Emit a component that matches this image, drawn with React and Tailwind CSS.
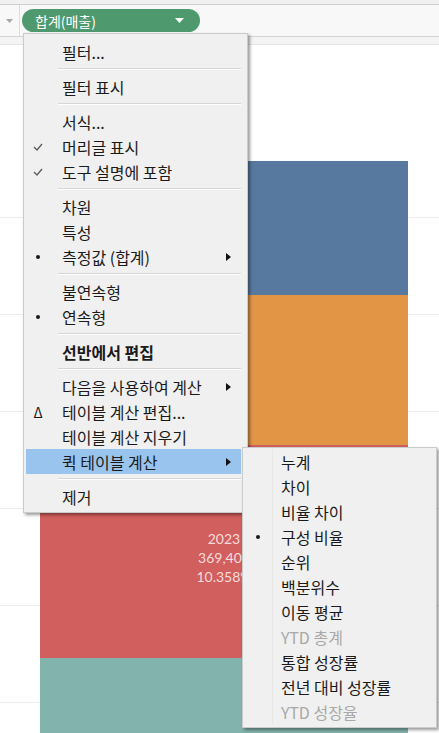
import { useState } from 'react'

const MENU = [
  { label: '필터...' },
  { sep: true },
  { label: '필터 표시' },
  { sep: true },
  { label: '서식...' },
  { label: '머리글 표시', mark: 'check' },
  { label: '도구 설명에 포함', mark: 'check' },
  { sep: true },
  { label: '차원' },
  { label: '특성' },
  { label: '측정값 (합계)', mark: 'dot', sub: true },
  { sep: true },
  { label: '불연속형' },
  { label: '연속형', mark: 'dot' },
  { sep: true },
  { label: '선반에서 편집', bold: true },
  { sep: true },
  { label: '다음을 사용하여 계산', sub: true },
  { label: '테이블 계산 편집...', mark: 'delta' },
  { label: '테이블 계산 지우기' },
  { label: '퀵 테이블 계산', sub: true, active: true },
  { sep: true },
  { label: '제거' },
]

const QUICK = [
  { label: '누계' },
  { label: '차이' },
  { label: '비율 차이' },
  { label: '구성 비율', mark: 'dot' },
  { label: '순위' },
  { label: '백분위수' },
  { label: '이동 평균' },
  { label: 'YTD 총계', disabled: true },
  { label: '통합 성장률' },
  { label: '전년 대비 성장률' },
  { label: 'YTD 성장율', disabled: true },
]

function Mark({ type }) {
  if (type === 'check')
    return (
      <svg width="10" height="8" viewBox="0 0 10 8" fill="none">
        <path d="M1 4l3 3 5-6" stroke="#5a5a5a" strokeWidth="1.3" />
      </svg>
    )
  if (type === 'dot') return <span className="block w-[4px] h-[4px] rounded-full bg-[#1a1a1a]" />
  if (type === 'delta') return <span className="text-[14px] leading-none text-[#1a1a1a]">Δ</span>
  return null
}

function Arrow() {
  return (
    <svg width="5" height="8" viewBox="0 0 5 8" className="ml-auto mr-[10px] shrink-0">
      <path d="M0 0l5 4-5 4z" fill="#111" />
    </svg>
  )
}

export default function App() {
  const [open] = useState(true)
  const grid = [0, 1, 2, 3, 4, 5]

  return (
    <div className="relative w-[439px] h-[733px] overflow-hidden bg-white font-['Noto_Sans_CJK_KR','Noto_Sans',sans-serif] text-[#1a1a1a]">
      {/* Header */}
      <div className="h-[5px] bg-[#f1f1f1] border-b border-[#cfcfcf]" />
      <div className="h-[32px] flex items-center bg-[#f8f8f8] border-b border-[#d4d4d4]">
        <div className="w-[20px] h-full flex items-center justify-center border-r border-[#dcdcdc]">
          <svg width="7" height="4" viewBox="0 0 7 4"><path d="M0 0h7L3.5 4z" fill="#a8a8a8" /></svg>
        </div>
        <div className="ml-[2px] w-[178px] h-[23px] rounded-full bg-[#4e9a6e] flex items-center pl-[13px] pr-[16px]">
          <span className="text-[14px] text-white leading-none">합계(매출)</span>
          <svg width="9" height="5" viewBox="0 0 9 5" className="ml-auto"><path d="M0 0h9L4.5 5z" fill="#fff" /></svg>
        </div>
      </div>
      <div className="h-[8px] bg-[#f4f4f4] border-b border-[#e4e4e4]" />

      {/* Chart */}
      <div className="grid">
        <div className="col-start-1 row-start-1 pt-[172px]">
          {grid.map(i => (
            <div key={i} className="h-[97px] border-t border-[#ececec]" />
          ))}
        </div>
        <div className="col-start-1 row-start-1 pt-[116px] pl-[40px]">
          <div className="w-[368px] flex flex-col">
            <div className="h-[134px] bg-[#58799f]" />
            <div className="h-[150px] bg-[#e29545]" />
            <div className="h-[213px] bg-[#d15f5e] pt-[84px] text-center font-['Lato',sans-serif] text-[14px] leading-[19px] text-[#f5dcdb]">
              <div>2023</div>
              <div>369,404</div>
              <div>10.358%</div>
            </div>
            <div className="h-[100px] bg-[#83b3ad]" />
          </div>
        </div>
      </div>

      {/* Context menu */}
      {open && (
        <div className="absolute left-[23px] top-[33px] w-[225px] bg-[#f0f0f0] border border-[#cbcbcb] pt-[5px] pb-[3px] shadow-[2px_2px_3px_rgba(0,0,0,0.4)] text-[16px]">
          {MENU.map((m, i) =>
            m.sep ? (
              <div key={i} className="h-[10px] flex flex-col justify-center ml-[34px] mr-[6px]">
                <div className="h-px bg-[#d6d6d6]" />
                <div className="h-px bg-white" />
              </div>
            ) : (
              <div key={i} className={`h-[25px] ml-[2px] mr-[6px] flex items-center ${m.active ? 'bg-[#99c4ee]' : ''}`}>
                <div className="w-[36px] shrink-0 pl-[5px]">
                  <div className="w-[14px] flex justify-center"><Mark type={m.mark} /></div>
                </div>
                <span className={`leading-none whitespace-nowrap ${m.bold ? 'font-bold' : ''}`}>{m.label}</span>
                {m.sub && <Arrow />}
              </div>
            )
          )}
        </div>
      )}

      {/* Quick table calc submenu */}
      {open && (
        <div className="absolute left-[242px] top-[447px] w-[195px] bg-[#f0f0f0] border border-[#cbcbcb] pt-[1px] pb-[3px] shadow-[2px_2px_3px_rgba(0,0,0,0.4)] text-[16px]">
          {QUICK.map((q, i) => (
            <div key={i} className="h-[25px] flex items-center">
              <div className="w-[30px] h-full shrink-0 flex items-center justify-center border-r border-[#e6e6e6]">
                <Mark type={q.mark} />
              </div>
              <span className={`pl-[8px] leading-none whitespace-nowrap ${q.disabled ? 'text-[#a8a8a8]' : ''}`}>{q.label}</span>
            </div>
          ))}
        </div>
      )}
    </div>
  )
}
